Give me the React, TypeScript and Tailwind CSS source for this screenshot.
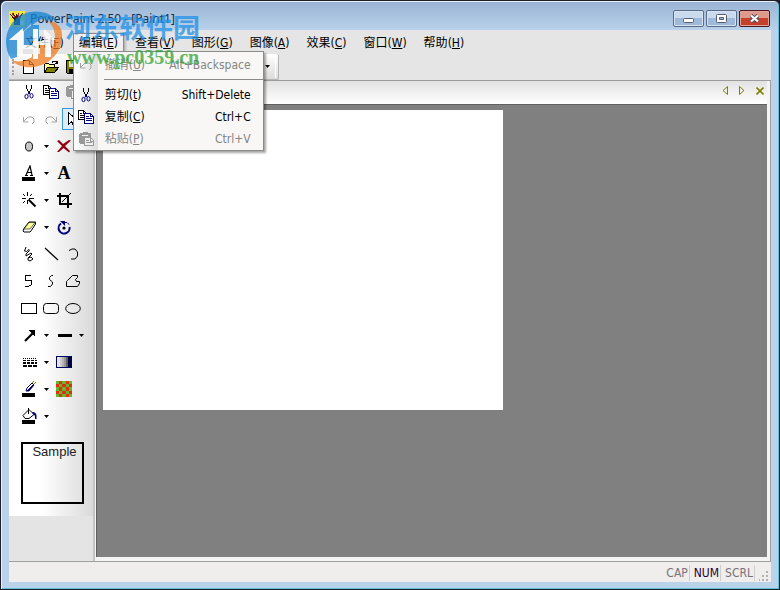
import type { ReactNode } from "react";

const menus = [
  { label: "文件", key: "F" },
  { label: "编辑", key: "E" },
  { label: "查看", key: "V" },
  { label: "图形", key: "G" },
  { label: "图像", key: "A" },
  { label: "效果", key: "C" },
  { label: "窗口", key: "W" },
  { label: "帮助", key: "H" },
];

function Icon({ children }: { children: ReactNode }) {
  return (
    <svg className="h-4 w-4 shrink-0" viewBox="0 0 16 16" fill="none" stroke="#000" shapeRendering="crispEdges" aria-hidden="true">
      {children}
    </svg>
  );
}

/* Clipboard icons */
const CutIcon = () => (
  <Icon>
    <path d="M5.5 1v3l1 2 1 2 1 2M10.5 1v3l-1 2-1 2-1 2" strokeWidth="1.3" />
    <g stroke="#000080" shapeRendering="auto">
      <ellipse cx="5.5" cy="12.5" rx="1.6" ry="2.2" />
      <ellipse cx="10.5" cy="11.8" rx="1.6" ry="2.2" />
      <path d="M7 10.5l1-2 1 1.5" />
    </g>
  </Icon>
);
const CopyIcon = () => (
  <Icon>
    <path d="M.5 1.5h5l3 3v6h-8z" fill="#fff" />
    <path d="M5.5 1.5v3h3M2 4.5h2M2 6.5h4M2 8.5h4" />
    <path d="M6.5 4.5h6l3 3v7h-9z" fill="#fff" stroke="#000080" />
    <path d="M12.5 4.5v3h3M8 7.5h3M8 9.5h6M8 11.5h6" stroke="#000080" />
  </Icon>
);
const PasteIcon = () => (
  <Icon>
    <path d="M1 3l1-1h2l1-1h4l1 1h2l1 1v3H7v7H2l-1-1z" fill="#999" stroke="none" />
    <path d="M4 4.500h6" stroke="#eee" />
    <path d="M6.5 6.5h6l3 3v5h-9z" fill="#eee" stroke="#999" />
    <path d="M8 9.500h3M8 11.500h6M12.500 7v3h3" stroke="#999" />
  </Icon>
);
const UndoIcon = () => (
  <Icon>
    <path d="M2.500 6v5h5M3 10l2-2 2-2h4l2 2v3l-2 2" stroke="#a3a3a3" shapeRendering="auto" />
  </Icon>
);
const RedoIcon = () => (
  <Icon>
    <path d="M13.500 6v5h-5M13 10l-2-2-2-2H5L3 8v3l2 2" stroke="#a3a3a3" shapeRendering="auto" />
  </Icon>
);

/* File icons */
const NewIcon = () => (
  <Icon>
    <path d="M2.500 1.500h6l4 4v9h-10z" fill="#fff" />
    <path d="M8.500 1.500v4h4" />
  </Icon>
);
const OpenIcon = () => (
  <Icon>
    <path d="M1.500 13.500v-8l1-1h3l1 1h5v3" fill="#ffff99" />
    <path d="M1.500 13.500l3-5h11l-4 5z" fill="#808000" />
    <path d="M9 3.500l1-1h3l1 2M14.500 2v3M12 4.500h3" />
  </Icon>
);
const SaveIcon = () => (
  <Icon>
    <path d="M1.500 1.500h13v13h-12l-1-1z" fill="#808000" />
    <path d="M4 2h8v6H4z" fill="#ddd" stroke="none" />
    <path d="M4 10h8v4H4z" fill="#000" stroke="none" />
  </Icon>
);

/* Drawing tool icons */
const PointerIcon = () => (
  <Icon>
    <path d="M3.500 1.500v12l3-3 2 4h2l-2-5h4z" fill="#fff" />
  </Icon>
);
const SpotIcon = () => (
  <Icon>
    <ellipse cx="8" cy="8.500" rx="3.500" ry="4.500" fill="#c8c8c8" shapeRendering="auto" />
  </Icon>
);
const DeleteIcon = () => (
  <Icon>
    <path d="M1 3l2-1 4 4 6-4 2 .5L9 8l5 5-1 1.500L7.500 10 3 14H1l5-6z" fill="#900010" stroke="none" shapeRendering="auto" />
  </Icon>
);
const TextColorIcon = () => (
  <Icon>
    <path d="M5 10l4-9 2 9M6.500 7.500h4M4 10.500h3M9 10.500h3" shapeRendering="auto" strokeWidth="1.2" />
    <path d="M1 12h13v4H1z" fill="#000" stroke="none" />
  </Icon>
);
const TextToolIcon = () => (
  <span className="font-['Liberation_Serif',serif] text-lg leading-4 font-bold" aria-hidden="true">A</span>
);
const WandIcon = () => (
  <Icon>
    <path d="M7.500 7.500l7 7" strokeWidth="2" shapeRendering="auto" />
    <path d="M6.500 0v4M6.500 8v4M1 6.500h4M8 6.500h5M2 2l2 2M11 2L9 4M2 11l2-2" />
  </Icon>
);
const CropIcon = () => (
  <Icon>
    <path d="M4 1v11h12M1 4h11v12" strokeWidth="2" />
    <path d="M14.500 1.500l-9 9" />
  </Icon>
);
const EraserIcon = () => (
  <Icon>
    <path d="M3 9.500L8 3h6.500v2L10 12l-1 1H3L2 12z" fill="#fff" shapeRendering="auto" />
    <path d="M3 10l5-6.500h6L9 10z" fill="#ffff99" strokeWidth=".6" shapeRendering="auto" />
  </Icon>
);
const RotateIcon = () => (
  <Icon>
    <g shapeRendering="auto">
      <path d="M5 4.500A5.500 5.500 0 1 0 13.500 8" stroke="#00007c" strokeWidth="2" />
      <path d="M4 2h5v5z" fill="#00007c" stroke="none" />
      <path d="M9 3.500h2.500l2 3" stroke="#00007c" strokeDasharray="2 1" />
      <circle cx="8" cy="9" r="1.6" fill="#000" stroke="none" />
    </g>
  </Icon>
);
const ScribbleIcon = () => (
  <Icon>
    <path d="M5 1L3.500 5l2 .5 2.500-2 .5 1L5 8v2l5-3 1 1-4 4v2l2 1 3-2-2-2-3 1" shapeRendering="auto" />
  </Icon>
);
const LineIcon = () => (
  <Icon>
    <path d="M2 2l13 12" strokeWidth="1.3" shapeRendering="auto" />
  </Icon>
);
const ArcIcon = () => (
  <Icon>
    <path d="M4 4.500L7 3h3l2.500 3v4L10 13H6" shapeRendering="auto" />
  </Icon>
);
const PolylineIcon = () => (
  <Icon>
    <path d="M10 2.500H4.500v5h6v4l-3 2H4" />
  </Icon>
);
const CurveIcon = () => (
  <Icon>
    <path d="M10 2.500H8.500l-2 2v2l3 2.500v2l-2 2.500H5" shapeRendering="auto" />
  </Icon>
);
const PolygonIcon = () => (
  <Icon>
    <path d="M2.500 7.500l5-5h5v2l-2 2 1 2h3v2l-2 3H1.500v-5z" shapeRendering="auto" />
  </Icon>
);
const RectIcon = () => (
  <Icon>
    <path d="M.5 3.500h15v10H.5z" />
  </Icon>
);
const RoundRectIcon = () => (
  <Icon>
    <rect x=".5" y="3.5" width="15" height="10" rx="3" shapeRendering="auto" />
  </Icon>
);
const EllipseIcon = () => (
  <Icon>
    <ellipse cx="8" cy="8.500" rx="7.300" ry="5" shapeRendering="auto" />
  </Icon>
);
const ArrowIcon = () => (
  <Icon>
    <path d="M4 14l9-9" strokeWidth="2.2" shapeRendering="auto" />
    <path d="M8 3h6v6h-1L8 4z" fill="#000" stroke="none" />
  </Icon>
);
const WeightIcon = () => (
  <Icon>
    <path d="M2 7h14v3H2z" fill="#000" stroke="none" />
  </Icon>
);
const DashIcon = () => (
  <Icon>
    <path d="M2 4.500h14" strokeDasharray="1 1" />
    <path d="M2 6.500h14" strokeDasharray="3 1" />
    <path d="M2 9h14" strokeWidth="2" strokeDasharray="3 1" />
    <path d="M2 12h14" strokeWidth="2" strokeDasharray="4 1" />
  </Icon>
);
const GradientIcon = () => (
  <Icon>
    <path d="M.5 2.500h15v11H.5z" fill="#e4e4e4" stroke="#000060" />
    <path d="M4 3h2v10H4z" fill="#ccc" stroke="none" />
    <path d="M6 3h2v10H6z" fill="#b4b4b4" stroke="none" />
    <path d="M8 3h2v10H8z" fill="#989898" stroke="none" />
    <path d="M10 3h2v10h-2z" fill="#606060" stroke="none" />
    <path d="M12 3h3v10h-3z" fill="#000040" stroke="none" />
  </Icon>
);
const BrushIcon = () => (
  <Icon>
    <path d="M5 10l1-3 5-5 2 2-5 6z" fill="#fff" stroke="#000080" shapeRendering="auto" />
    <path d="M6 10l5-6 1 1-4 5z" fill="#000060" stroke="none" />
    <path d="M11 2l2-2M13 3l2-2" stroke="#808000" />
    <path d="M1 12h13v4H1z" fill="#000" stroke="none" />
  </Icon>
);
const PatternIcon = () => (
  <Icon>
    <path d="M0 0h16v16H0z" fill="#e03010" stroke="none" />
    <path
      d="M0 0h3v3H0zM6 0h4v3H6zM13 0h3v3h-3zM3 3h3v3H3zM10 3h3v3h-3zM0 6h3v4H0zM6 6h4v4H6zM13 6h3v4h-3zM3 10h3v3H3zM10 10h3v3h-3zM0 13h3v3H0zM6 13h4v3H6zM13 13h3v3h-3z"
      fill="#62b82c"
      stroke="none"
    />
  </Icon>
);
const FillIcon = () => (
  <Icon>
    <path d="M8 1.500l5 5-5 4H4l-2-3z" fill="#fff" shapeRendering="auto" />
    <path d="M7.500 0v6" />
    <path d="M11 4c4 0 5 2 4.500 7H14c0-3 0-4-2-5z" fill="#000080" stroke="none" shapeRendering="auto" />
    <path d="M1 12h13v4H1z" fill="#000" stroke="none" />
  </Icon>
);

type ToolProps = { label: string; active?: boolean; children: ReactNode };

function Tool({ label, active, children }: ToolProps) {
  return (
    <button
      type="button"
      title={label}
      aria-label={label}
      className={
        active
          ? "flex h-[22px] w-[22px] items-center justify-center border border-[#3c96dc] bg-[#dcecf9]"
          : "flex h-[22px] w-[22px] items-center justify-center"
      }
    >
      {children}
    </button>
  );
}

function Drop({ label }: { label: string }) {
  return (
    <button type="button" aria-label={label} className="flex h-[22px] w-[13px] items-center justify-center">
      <svg className="h-[3px] w-[5px]" viewBox="0 0 5 3" aria-hidden="true">
        <path d="M0 0h5L2.500 3z" />
      </svg>
    </button>
  );
}

const toolRows: ReactNode[] = [
  <><Tool label="Cut"><CutIcon /></Tool><Tool label="Copy"><CopyIcon /></Tool><Tool label="Paste"><PasteIcon /></Tool></>,
  <><Tool label="Undo"><UndoIcon /></Tool><Tool label="Redo"><RedoIcon /></Tool><Tool label="Select" active><PointerIcon /></Tool></>,
  <><Tool label="Spot"><SpotIcon /></Tool><Drop label="Spot options" /><Tool label="Delete"><DeleteIcon /></Tool></>,
  <><Tool label="Text color"><TextColorIcon /></Tool><Drop label="Text colors" /><Tool label="Text"><TextToolIcon /></Tool></>,
  <><Tool label="Magic wand"><WandIcon /></Tool><Drop label="Wand options" /><Tool label="Crop"><CropIcon /></Tool></>,
  <><Tool label="Eraser"><EraserIcon /></Tool><Drop label="Eraser size" /><Tool label="Rotate"><RotateIcon /></Tool></>,
  <><Tool label="Scribble"><ScribbleIcon /></Tool><Tool label="Line"><LineIcon /></Tool><Tool label="Arc"><ArcIcon /></Tool></>,
  <><Tool label="Polyline"><PolylineIcon /></Tool><Tool label="Curve"><CurveIcon /></Tool><Tool label="Polygon"><PolygonIcon /></Tool></>,
  <><Tool label="Rectangle"><RectIcon /></Tool><Tool label="Rounded rectangle"><RoundRectIcon /></Tool><Tool label="Ellipse"><EllipseIcon /></Tool></>,
  <><Tool label="Arrow"><ArrowIcon /></Tool><Drop label="Arrow styles" /><Tool label="Line weight"><WeightIcon /></Tool><Drop label="Line weights" /></>,
  <><Tool label="Dash style"><DashIcon /></Tool><Drop label="Dash styles" /><Tool label="Gradient"><GradientIcon /></Tool></>,
  <><Tool label="Pen color"><BrushIcon /></Tool><Drop label="Pen colors" /><Tool label="Pattern"><PatternIcon /></Tool></>,
  <><Tool label="Fill color"><FillIcon /></Tool><Drop label="Fill colors" /></>,
];

type EditItemProps = { icon: ReactNode; label: string; k: string; shortcut: string; disabled?: boolean };

function EditItem({ icon, label, k, shortcut, disabled }: EditItemProps) {
  return (
    <button
      type="button"
      role="menuitem"
      disabled={disabled}
      className="flex h-[22px] w-full items-center pr-3 pl-1 text-black disabled:text-[#858585]"
    >
      {icon}
      <span className="ml-[11px] flex-1 text-left">
        {label}(<u>{k}</u>)
      </span>
      <span>{shortcut}</span>
    </button>
  );
}

function EditMenu() {
  return (
    <div
      role="menu"
      className="absolute top-full left-0 z-10 -mt-px w-[191px] border border-[#8a8a8a] bg-[linear-gradient(90deg,#ffffff_0px,#dedede_24px,#f8f7f6_24px)] pt-0.5 shadow-[2px_2px_2px_rgba(0,0,0,0.35)]"
    >
      <EditItem icon={<UndoIcon />} label="撤消" k="U" shortcut="Alt+Backspace" disabled />
      <hr className="mt-[3px] mb-1 ml-[30px] border-[#8a8a8a]" />
      <EditItem icon={<CutIcon />} label="剪切" k="t" shortcut="Shift+Delete" />
      <EditItem icon={<CopyIcon />} label="复制" k="C" shortcut="Ctrl+C" />
      <EditItem icon={<PasteIcon />} label="粘贴" k="P" shortcut="Ctrl+V" disabled />
    </div>
  );
}

function TitleBar() {
  return (
    <header className="flex h-[29px] items-center pt-1.5 pr-px">
      <svg className="h-4 w-4" viewBox="0 0 16 16" shapeRendering="crispEdges" aria-hidden="true">
        <path d="M0 0h16v16H0z" fill="#f4e83c" />
        <path d="M1 3l4 4-1-6 3 5 1-5 1 5 5-4-3 6v6H5V9z" fill="#222" />
        <path d="M3 2l3 5M9 2v5" stroke="#c02020" />
        <path d="M11 9h4v5h-4z" fill="#fff" />
      </svg>
      <h1 className="ml-[5px] flex-1 font-['Noto_Sans',sans-serif] text-[#1a2a44]">PowerPaint 2.50 - [Paint1]</h1>
      <div className="flex gap-0.5">
        <button type="button" aria-label="Minimize" className="flex h-[17px] w-[31px] items-center justify-center rounded-xs border border-[#5b6b85] bg-linear-to-b from-[#c9daee] from-50% to-[#9fb9d8] to-50% shadow-[inset_0_0_0_1px_#d5e3f3]">
          <svg className="mt-1 h-[5px] w-[11px]" viewBox="0 0 11 5"><rect x=".5" y=".5" width="10" height="4" rx="1" fill="#fff" stroke="#555d70" /></svg>
        </button>
        <button type="button" aria-label="Restore" className="flex h-[17px] w-[31px] items-center justify-center rounded-xs border border-[#5b6b85] bg-linear-to-b from-[#c9daee] from-50% to-[#9fb9d8] to-50% shadow-[inset_0_0_0_1px_#d5e3f3]">
          <svg className="h-[9px] w-[11px]" viewBox="0 0 11 9"><rect x=".5" y=".5" width="10" height="8" rx="1" fill="#fff" stroke="#555d70" /><path d="M3.500 3.500h4v2h-4z" fill="#9fb9d8" stroke="#555d70" /></svg>
        </button>
        <button type="button" aria-label="Close" className="flex h-[17px] w-[31px] items-center justify-center rounded-xs border border-[#4a1620] bg-linear-to-b from-[#df9a8c] from-45% to-[#c4402c] to-45% shadow-[inset_0_0_0_1px_#e3a497]">
          <svg className="h-[9px] w-[11px]" viewBox="0 0 11 9"><path d="M2 1.500l7 6M9 1.500l-7 6" stroke="#4c4c5c" strokeWidth="4" /><path d="M2 1.500l7 6M9 1.500l-7 6" stroke="#fff" strokeWidth="2.2" /></svg>
        </button>
      </div>
    </header>
  );
}

function MenuBar() {
  return (
    <nav className="flex h-6 items-start gap-[5px] bg-[#e5e5e5] pt-[3px] pl-2.5">
      {menus.map((m) =>
        m.label === "编辑" ? (
          <div key={m.label} className="relative -ml-0.5">
            <button type="button" aria-expanded="true" className="h-[19px] border border-b-0 border-[#8a8a8a] bg-[#f0f0f0] px-[5px] whitespace-nowrap shadow-[2px_0_2px_rgba(0,0,0,0.2)]">
              {m.label}(<u>{m.key}</u>)
            </button>
            <EditMenu />
          </div>
        ) : (
          <button key={m.label} type="button" className="h-[19px] px-1.5 whitespace-nowrap">
            {m.label}(<u>{m.key}</u>)
          </button>
        ),
      )}
    </nav>
  );
}

function Toolbar() {
  return (
    <div className="flex h-[27px] border-b border-[#9b9b9b] bg-[#e5e5e5]">
      <div className="flex w-[270px] items-center justify-between rounded-r-xs border-r border-b border-[#b5b5b5] bg-linear-to-b from-white to-[#dcdcdc]">
        <div className="flex items-center pl-[3px]">
          <span className="mr-1 h-4 border-l-2 border-dotted border-[#a0a0a0]" />
          <Tool label="New"><NewIcon /></Tool>
          <Tool label="Open"><OpenIcon /></Tool>
          <Tool label="Save"><SaveIcon /></Tool>
        </div>
        <div className="mr-0.5 border-r border-white pr-px">
          <Drop label="Toolbar options" />
        </div>
      </div>
    </div>
  );
}

function Toolbox() {
  return (
    <aside className="w-[84px] shrink-0 bg-[#e4e4e4]">
      <div className="bg-linear-to-r from-white from-40% to-[#dadada] pb-3">
        {toolRows.map((row, i) => (
          <div key={i} className="flex h-[27px] items-start pl-[9px]">
            {row}
          </div>
        ))}
        <div className="mt-2.5 ml-3 h-[62px] w-[63px] border-2 border-black bg-linear-to-r from-white from-30% to-[#e2e2e2] pl-1 text-center font-['Liberation_Sans',Arial,sans-serif] text-[13px] leading-4 text-[#222]">
          Sample
        </div>
      </div>
    </aside>
  );
}

function Workspace() {
  return (
    <main className="flex flex-1 flex-col border-r border-l-2 border-[#a0a0a0] border-l-[#c4c4c4] bg-[#f4f4f4] pr-[3px] pb-1 pl-px">
      <div className="flex h-[23px] items-center justify-end gap-[11px] bg-linear-to-b from-[#e2e2e2] to-white pr-[3px] pb-1">
        <button type="button" aria-label="Previous">
          <svg className="h-[9px] w-[6px]" viewBox="0 0 6 9"><path d="M5.500 .5v8L1 4.500z" fill="none" stroke="#808000" /></svg>
        </button>
        <button type="button" aria-label="Next">
          <svg className="h-[9px] w-[6px]" viewBox="0 0 6 9"><path d="M.5 .5v8L5 4.500z" fill="none" stroke="#808000" /></svg>
        </button>
        <button type="button" aria-label="Close image">
          <svg className="h-2 w-2" viewBox="0 0 8 8"><path d="M.5 .5l7 7M7.500 .5l-7 7" stroke="#808000" strokeWidth="1.6" /></svg>
        </button>
      </div>
      <div className="flex-1 border-t border-l border-[#606060] bg-[#808080] pt-[5px] pl-1.5">
        <canvas className="h-[300px] w-[400px] bg-white" aria-label="Paint1" />
      </div>
    </main>
  );
}

function StatusBar() {
  return (
    <footer className="flex h-[21px] items-center justify-end border-t border-[#a0a0a0] bg-[#f0eded] pt-0.5 text-[#77727a]">
      <span className="border-r border-[#d0cccc] pr-px">CAP</span>
      <span className="border-r border-[#d0cccc] pr-px pl-1 text-[#2a0030]">NUM</span>
      <span className="border-r border-[#d0cccc] pr-px pl-1">SCRL</span>
      <svg className="mt-1.5 mr-0.5 ml-1 h-2.5 w-2.5" viewBox="0 0 10 10" fill="#b4b0b0" aria-hidden="true">
        <path d="M7 0h2v2H7zM7 4h2v2H7zM7 8h2v2H7zM3 4h2v2H3zM3 8h2v2H3zM0 8h1v2H0z" />
      </svg>
    </footer>
  );
}

function SiteBadge() {
  return (
    <div className="pointer-events-none absolute top-2 left-1 z-20 flex opacity-75">
      <svg className="h-[60px] w-[58px]" viewBox="0 0 58 60" aria-hidden="true">
        <path d="M6 50C-3 36 0 16 16 6 31-1 46 3 53 13 44 8 38 9 33 12l-7 5v-2L12 28v20z" fill="#1684d2" />
        <path d="M19 22l8-6h7v16h-7v7h-8z" fill="#1684d2" />
        <path d="M56 20c5 18-9 36-27 38-9 1-17-1-23-7 8 3 15 1 21-3V45h8V32h5v12c7-4 10-9 10-16 0-6-2-11-6-15 5-1 10 3 12 7z" fill="#f07c20" />
        <path d="M4 31L18 19v17h10v4H18v7h-6V31z" fill="#fff" />
        <path d="M28 20h5v30h-5z" fill="#fff" />
        <path d="M33 32h6V20l12 11h-5v17h-6V36h-7z" fill="#fff" />
      </svg>
      <div className="flex flex-col">
        <span className="ml-0.5 font-['Noto_Sans_CJK_SC',sans-serif] text-[27px] leading-9 font-bold text-[#1f90e6]">河东软件园</span>
        <span className="ml-1 font-['Liberation_Serif',serif] text-xl leading-6 font-bold text-[#2fa32f]">www.pc0359.cn</span>
      </div>
    </div>
  );
}

export default function App() {
  return (
    <div className="bg-[#1c1c2a]">
      <div className="relative flex min-h-screen flex-col rounded-t-md border border-[#20202e] bg-[linear-gradient(180deg,#99b4d4_0px,#bad2eb_30px,#bad2ea_100%)] px-2 pb-[7px] font-['DejaVu_Sans_Condensed','Noto_Sans','Noto_Sans_CJK_SC',sans-serif] text-xs shadow-[inset_1px_1px_0_#e8f1fa,inset_-1px_-1px_0_#58c4dc]">
        <TitleBar />
        <MenuBar />
        <Toolbar />
        <div className="flex flex-1">
          <Toolbox />
          <Workspace />
        </div>
        <StatusBar />
        <SiteBadge />
      </div>
    </div>
  );
}
